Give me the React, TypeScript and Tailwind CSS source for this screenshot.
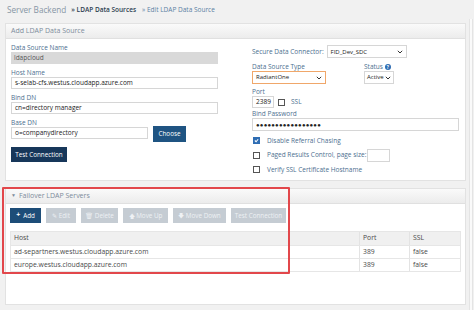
import React from 'react';

const font = { fontFamily: '"Open Sans", "Liberation Sans", sans-serif' };

const Label: React.FC<{ children: React.ReactNode }> = ({ children }) => (
  <div className="text-[6.5px] leading-[9px] text-[#4d6f8f]">{children}</div>
);

const Box: React.FC<{ className?: string; children?: React.ReactNode }> = ({ className = '', children }) => (
  <div className={`h-[12px] border border-[#d6d6d6] bg-white text-[6.5px] leading-[10px] text-[#222] px-[3px] flex items-center ${className}`}>
    {children}
  </div>
);

const Chevron = () => (
  <svg width="6" height="4" viewBox="0 0 6 4" className="ml-auto shrink-0">
    <path d="M0.8 0.8 L3 3 L5.2 0.8" fill="none" stroke="#333" strokeWidth="1" />
  </svg>
);

const Check: React.FC<{ checked?: boolean }> = ({ checked }) => (
  <div className={`w-[7px] h-[7px] border flex items-center justify-center ${checked ? 'bg-[#2f6db3] border-[#2f6db3]' : 'bg-white border-[#555]'}`}>
    {checked && (
      <svg width="5" height="5" viewBox="0 0 6 6">
        <path d="M1 3 L2.5 4.5 L5 1.5" fill="none" stroke="#fff" strokeWidth="1.3" />
      </svg>
    )}
  </div>
);

const Btn: React.FC<{ children: React.ReactNode; on?: boolean; w: string }> = ({ children, on, w }) => (
  <div className={`${w} h-[15px] flex items-center justify-center gap-[3px] text-[6.3px] ${on ? 'bg-[#1d4d78] text-white' : 'bg-[#c5ccd3] text-[#eef1f4]'}`}>
    {children}
  </div>
);

const Cell: React.FC<{ w?: string; last?: boolean; children: React.ReactNode }> = ({ w = '', last, children }) => (
  <div className={`${w} ${last ? 'flex-1' : 'border-r border-[#e3e3e3]'} pl-[3px] h-full flex items-center`}>
    <span className="text-[#4a4a4a]">{children}</span>
  </div>
);

export default function App() {
  return (
    <div className="w-[474px] h-[310px] bg-[#f1f1f1] overflow-hidden relative" style={font}>
      {/* Title */}
      <div className="h-[19px] flex items-center gap-[4px] pl-[7px] pt-[1px]">
        <span className="text-[8.2px] text-[#8796a5]">Server Backend</span>
        <span className="text-[6.5px] font-semibold text-[#2c3e50] ml-[1px]">» LDAP Data Sources</span>
        <span className="text-[6.5px] text-[#5b7fa3] ml-[2px]">» Edit LDAP Data Source</span>
      </div>

      <div className="flex">
        <div className="ml-[5px] w-[461px] flex flex-col gap-[7px]">
          {/* Add LDAP Data Source */}
          <div className="bg-white border border-[#e2e2e2] h-[158px] mt-[4px]">
            <div className="h-[15px] bg-gradient-to-b from-[#fafafa] to-[#ececec] border-b border-[#e0e0e0] flex items-center pl-[5px]">
              <span className="text-[7px] text-[#7d8c9b]">Add LDAP Data Source</span>
            </div>
            <div className="flex px-[5px] pt-[4px]">
              {/* left column */}
              <div className="w-[238px] flex flex-col">
                <Label>Data Source Name</Label>
                <div className="w-[207px] h-[12px] bg-[#d9d9d9] text-[6.5px] leading-[12px] text-[#555] px-[3px]">ldapcloud</div>
                <div className="mt-[4px]"><Label>Host Name</Label></div>
                <Box className="w-[207px]">s-selab-cfs.westus.cloudapp.azure.com</Box>
                <div className="mt-[4px]"><Label>Bind DN</Label></div>
                <Box className="w-[207px]">cn=directory manager</Box>
                <div className="mt-[4px]"><Label>Base DN</Label></div>
                <div className="flex items-start gap-[5px]">
                  <Box className="w-[137px]">o=companydirectory</Box>
                  <div className="w-[33px] h-[16px] -mt-[1px] bg-[#1f5482] text-white text-[6.3px] flex items-center justify-center">Choose</div>
                </div>
                <div className="mt-[5px] w-[56px] h-[15px] bg-[#17375a] text-white text-[6.3px] flex items-center justify-center">Test Connection</div>
              </div>
              {/* right column */}
              <div className="flex flex-col pl-[3px]">
                <div className="flex items-center gap-[3px] mt-[2px]">
                  <span className="text-[6.5px] text-[#4d6f8f]">Secure Data Connector:</span>
                  <Box className="w-[80px] h-[13px] text-[6px]">FID_Dev_SDC<Chevron /></Box>
                </div>
                <div className="flex mt-[4px]">
                  <div className="w-[112px]">
                    <Label>Data Source Type</Label>
                    <div className="w-[74px] h-[13px] border border-[#f0a76a] bg-white text-[6px] px-[3px] flex items-center text-[#222]">RadiantOne<Chevron /></div>
                  </div>
                  <div>
                    <div className="flex items-center gap-[2px]">
                      <Label>Status</Label>
                      <div className="w-[6px] h-[6px] rounded-full bg-[#2f6db3] text-white text-[4.5px] leading-[6px] text-center font-bold">?</div>
                    </div>
                    <div className="w-[30px] h-[13px] border border-[#d6d6d6] bg-white text-[6px] px-[2px] flex items-center text-[#222]">Active<Chevron /></div>
                  </div>
                </div>
                <div className="mt-[3px]"><Label>Port</Label></div>
                <div className="flex items-center gap-[4px]">
                  <Box className="w-[22px] px-[2px]">2389</Box>
                  <Check />
                  <span className="text-[6.5px] text-[#4d6f8f] ml-[2px]">SSL</span>
                </div>
                <div className="mt-[1px]"><Label>Bind Password</Label></div>
                <Box className="w-[207px] h-[13px] text-[6px] tracking-[0.2px]">●●●●●●●●●●●●●●●●●</Box>
                <div className="flex items-center gap-[7px] mt-[5px] pl-[1px]">
                  <Check checked />
                  <span className="text-[6.5px] text-[#4d6f8f]">Disable Referral Chasing</span>
                </div>
                <div className="flex items-center gap-[7px] mt-[3px] pl-[1px]">
                  <Check />
                  <span className="text-[6.5px] text-[#4d6f8f]">Paged Results Control, page size:</span>
                  <div className="w-[23px] h-[13px] border border-[#d6d6d6] bg-white -ml-[6px]"></div>
                </div>
                <div className="flex items-center gap-[7px] mt-[3px] pl-[1px]">
                  <Check />
                  <span className="text-[6.5px] text-[#4d6f8f]">Verify SSL Certificate Hostname</span>
                </div>
              </div>
            </div>
          </div>

          {/* Failover LDAP Servers */}
          <div className="bg-white border border-[#e2e2e2] h-[117px]">
            <div className="h-[15px] bg-gradient-to-b from-[#fafafa] to-[#ececec] border-b border-[#e0e0e0] flex items-center pl-[5px] gap-[3px]">
              <span className="text-[5px] text-[#7d8c9b]">▼</span>
              <span className="text-[7px] text-[#7d8c9b]">Failover LDAP Servers</span>
            </div>
            <div className="px-[4px] pt-[4px]">
              <div className="flex gap-[5px]">
                <Btn on w="w-[31px]"><span className="font-bold text-[7px]">+</span>Add</Btn>
                <Btn w="w-[30px]">✎ Edit</Btn>
                <Btn w="w-[37px]">🗑︎ Delete</Btn>
                <Btn w="w-[45px]">🡅 Move Up</Btn>
                <Btn w="w-[53px]">🡇 Move Down</Btn>
                <Btn w="w-[55px]">Test Connection</Btn>
              </div>
              <div className="mt-[8px] w-[451px] border border-[#e6e6e6] text-[6.8px]">
                <div className="flex h-[13px] bg-[#f0f0f0] items-center">
                  <Cell w="w-[349px]">Host</Cell>
                  <Cell w="w-[50px]">Port</Cell>
                  <Cell last>SSL</Cell>
                </div>
                <div className="flex h-[13px] items-center border-t border-[#e6e6e6]">
                  <Cell w="w-[349px]">ad-separtners.westus.cloudapp.azure.com</Cell>
                  <Cell w="w-[50px]">389</Cell>
                  <Cell last>false</Cell>
                </div>
                <div className="flex h-[13px] items-center border-t border-[#e6e6e6]">
                  <Cell w="w-[349px]">europe.westus.cloudapp.azure.com</Cell>
                  <Cell w="w-[50px]">389</Cell>
                  <Cell last>false</Cell>
                </div>
              </div>
            </div>
          </div>
        </div>
        {/* right edge strip */}
        <div className="ml-[3px] w-[4px] h-[300px] bg-[#fafafa] border-x border-[#e4e4e4]"></div>
      </div>

      {/* red annotation box */}
      <div className="absolute left-[2px] top-[187px] w-[288px] h-[87px] border-2 border-[#e2474b] rounded-[1px] pointer-events-none"></div>
    </div>
  );
}
